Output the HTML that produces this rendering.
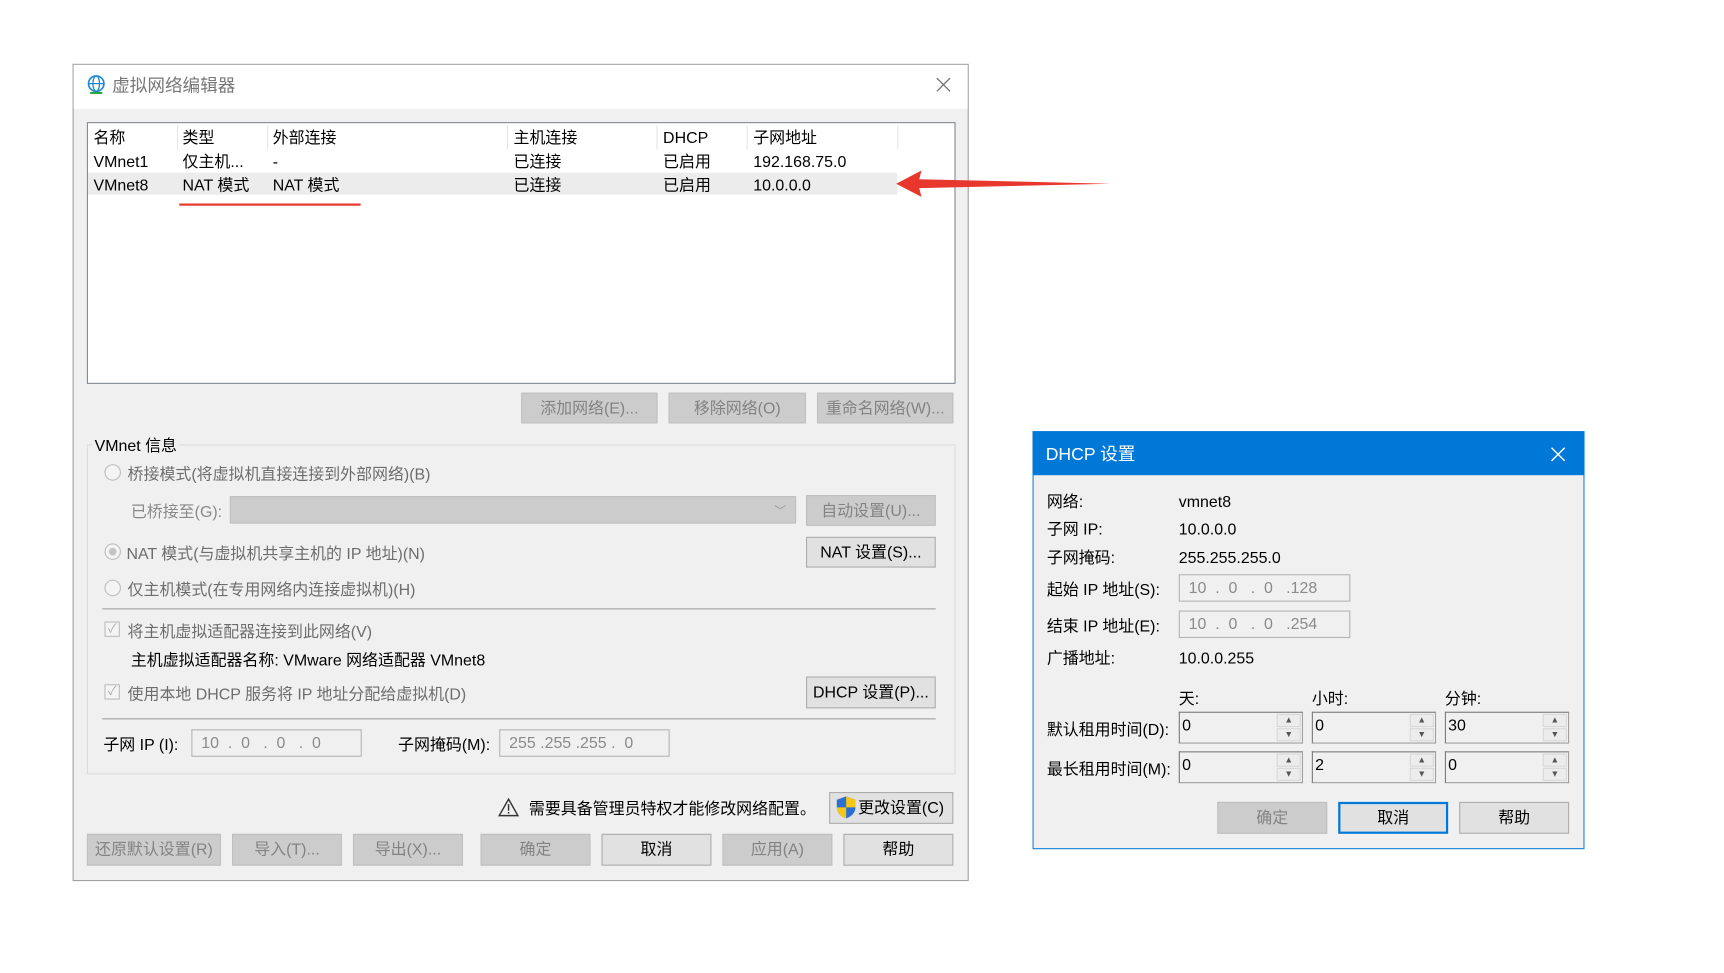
<!DOCTYPE html>
<html><head><meta charset="utf-8"><style>
*{box-sizing:border-box;margin:0;padding:0}
body{width:1724px;height:973px;background:#fff;overflow:hidden;font-family:"Liberation Sans","Noto Sans CJK SC",sans-serif;}
#s{position:absolute;left:0;top:0;width:1560px;height:880px;transform:scale(1.0996,1.1);transform-origin:0 0;}
.a{position:absolute;white-space:nowrap;font-size:14.5px;line-height:18px;color:#000;margin-top:2px}
.g{color:#6d6d6d}
.btn{position:absolute;background:#e1e1e1;border:1px solid #adadad;font-size:14.5px;text-align:center;color:#000;font-family:inherit;padding-top:1px}
.dis{background:#cccccc;border-color:#bfbfbf;color:#838383}
.ip{position:absolute;background:#f0f0f0;border:1px solid #b4b4b4;font-size:14.5px;color:#8a8a8a;line-height:22px;padding-left:8px;white-space:pre;padding-top:1px}
.radio{position:absolute;width:15px;height:15px;border:1px solid #bcbcbc;border-radius:50%;background:#f4f4f4}
.chk{position:absolute;width:14px;height:14px;border:1px solid #bcbcbc;background:#f4f4f4;font-size:11px;line-height:12px;text-align:center;color:#aaa}
.spin{position:absolute;width:113px;height:29px;background:#f0f0f0;border:1px solid #a0a0a0;border-top-color:#7a7a7a;border-left-color:#7a7a7a;font-size:14.5px;line-height:24px;padding-left:2px}
.spin i{position:absolute;right:1px;width:22px;height:12px;border:1px solid #d8d8d8;background:#ececec;font-style:normal;font-size:8px;line-height:10px;text-align:center;color:#555}
</style></head><body><div id="s">

<div style="position:absolute;left:66px;top:58px;width:815px;height:743px;border:1px solid #a0a0a0;background:#f0f0f0"></div>
<div style="position:absolute;left:67px;top:59px;width:813px;height:40px;background:#fff"></div>
<svg style="position:absolute;left:79px;top:68px" width="17" height="18" viewBox="0 0 17 18"><circle cx="8.5" cy="8" r="7" fill="none" stroke="#1e88d0" stroke-width="1.5"/><ellipse cx="8.5" cy="8" rx="3" ry="7" fill="none" stroke="#1e88d0" stroke-width="1.2"/><line x1="1.5" y1="8" x2="15.5" y2="8" stroke="#1e88d0" stroke-width="1.2"/><line x1="3" y1="16.5" x2="14" y2="16.5" stroke="#2aa63a" stroke-width="2"/></svg>
<div class="a" style="left:102px;top:68px;font-size:16px;color:#777">虚拟网络编辑器</div>
<svg style="position:absolute;left:851px;top:70px" width="14" height="14"><path d="M1 1L13 13M13 1L1 13" stroke="#777" stroke-width="1.2"/></svg>

<div style="position:absolute;left:79px;top:111px;width:790px;height:238px;background:#fff;border:1px solid #828790"></div>
<div style="position:absolute;left:80px;top:157px;width:736px;height:20px;background:#ececec"></div>
<div style="position:absolute;left:161px;top:114px;width:1px;height:22px;background:#e5e5e5"></div>
<div style="position:absolute;left:243px;top:114px;width:1px;height:22px;background:#e5e5e5"></div>
<div style="position:absolute;left:461px;top:114px;width:1px;height:22px;background:#e5e5e5"></div>
<div style="position:absolute;left:597px;top:114px;width:1px;height:22px;background:#e5e5e5"></div>
<div style="position:absolute;left:679px;top:114px;width:1px;height:22px;background:#e5e5e5"></div>
<div style="position:absolute;left:816px;top:114px;width:1px;height:22px;background:#e5e5e5"></div>
<div class="a" style="left:85px;top:115px">名称</div><div class="a" style="left:166px;top:115px">类型</div><div class="a" style="left:248px;top:115px">外部连接</div><div class="a" style="left:467px;top:115px">主机连接</div><div class="a" style="left:603px;top:115px">DHCP</div><div class="a" style="left:685px;top:115px">子网地址</div>
<div class="a" style="left:85px;top:137px">VMnet1</div><div class="a" style="left:166px;top:137px">仅主机...</div><div class="a" style="left:248px;top:137px">-</div><div class="a" style="left:467px;top:137px">已连接</div><div class="a" style="left:603px;top:137px">已启用</div><div class="a" style="left:685px;top:137px">192.168.75.0</div>
<div class="a" style="left:85px;top:158px">VMnet8</div><div class="a" style="left:166px;top:158px">NAT 模式</div><div class="a" style="left:248px;top:158px">NAT 模式</div><div class="a" style="left:467px;top:158px">已连接</div><div class="a" style="left:603px;top:158px">已启用</div><div class="a" style="left:685px;top:158px">10.0.0.0</div>
<div style="position:absolute;left:163px;top:185px;width:165px;height:2px;background:#e8372c"></div>
<svg style="position:absolute;left:810px;top:150px" width="205" height="34"><polygon points="5,17 28,5 26,13 200,17 26,21 28,29" fill="#e8372c"/></svg>

<div class="btn dis" style="left:474px;top:357px;width:124px;height:28px;line-height:26px">添加网络(E)...</div>
<div class="btn dis" style="left:608px;top:357px;width:125px;height:28px;line-height:26px">移除网络(O)</div>
<div class="btn dis" style="left:743px;top:357px;width:124px;height:28px;line-height:26px">重命名网络(W)...</div>

<div style="position:absolute;left:79px;top:404px;width:790px;height:300px;border:1px solid #dcdcdc"></div>
<div class="a" style="left:84px;top:395px;background:#f0f0f0;padding:0 2px">VMnet 信息</div>
<div class="radio" style="left:95px;top:422px"></div><div class="a g" style="left:116px;top:421px">桥接模式(将虚拟机直接连接到外部网络)(B)</div>
<div class="a g" style="left:119px;top:455px;color:#8a8a8a">已桥接至(G):</div>
<div style="position:absolute;left:209px;top:451px;width:515px;height:25px;background:#cccccc;border:1px solid #bfbfbf"></div>
<div class="a" style="left:704px;top:454px;color:#999;font-size:11px">﹀</div>
<div class="btn dis" style="left:733px;top:450px;width:118px;height:28px;line-height:26px">自动设置(U)...</div>
<div class="radio" style="left:95px;top:494px"><div style="position:absolute;left:3px;top:3px;width:7px;height:7px;border-radius:50%;background:#c4c4c4"></div></div><div class="a g" style="left:115px;top:493px">NAT 模式(与虚拟机共享主机的 IP 地址)(N)</div>
<div class="btn" style="left:733px;top:488px;width:118px;height:28px;line-height:26px">NAT 设置(S)...</div>
<div class="radio" style="left:95px;top:527px"></div><div class="a g" style="left:116px;top:526px">仅主机模式(在专用网络内连接虚拟机)(H)</div>
<div style="position:absolute;left:93px;top:553px;width:758px;height:1px;background:#a0a0a0"></div>
<div class="chk" style="left:95px;top:565px">✓</div><div class="a g" style="left:116px;top:564px">将主机虚拟适配器连接到此网络(V)</div>
<div class="a" style="left:119px;top:590px">主机虚拟适配器名称: VMware 网络适配器 VMnet8</div>
<div class="chk" style="left:95px;top:622px">✓</div><div class="a g" style="left:116px;top:621px">使用本地 DHCP 服务将 IP 地址分配给虚拟机(D)</div>
<div class="btn" style="left:733px;top:615px;width:118px;height:29px;line-height:27px">DHCP 设置(P)...</div>
<div style="position:absolute;left:93px;top:653px;width:758px;height:1px;background:#a0a0a0"></div>
<div class="a" style="left:94px;top:667px">子网 IP (I):</div>
<div class="ip" style="left:174px;top:663px;width:155px;height:25px">10  .  0   .  0   .  0</div>
<div class="a" style="left:362px;top:667px">子网掩码(M):</div>
<div class="ip" style="left:454px;top:663px;width:155px;height:25px">255 .255 .255 .  0</div>

<svg style="position:absolute;left:453px;top:725px" width="19" height="18"><polygon points="9.5,1.5 18,16.5 1,16.5" fill="none" stroke="#333" stroke-width="1.3"/><line x1="9.5" y1="6" x2="9.5" y2="12" stroke="#333" stroke-width="1.3"/><rect x="8.8" y="13.2" width="1.4" height="1.4" fill="#333"/></svg>
<div class="a" style="left:481px;top:725px">需要具备管理员特权才能修改网络配置。</div>
<div class="btn" style="left:754px;top:720px;width:113px;height:29px;line-height:27px;padding-left:18px">更改设置(C)</div>
<svg style="position:absolute;left:760px;top:723px" width="19" height="22" viewBox="0 0 19 22"><path d="M9.5 1 L18 4 V11 C18 16 14 19.5 9.5 21 C5 19.5 1 16 1 11 V4 Z" fill="#2b6fd0"/><path d="M9.5 1 L18 4 V11 H9.5 Z" fill="#f5c518"/><path d="M1 11 H9.5 V21 C5 19.5 1 16 1 11Z" fill="#f5c518"/></svg>

<div class="btn dis" style="left:79px;top:758px;width:122px;height:29px;line-height:27px">还原默认设置(R)</div>
<div class="btn dis" style="left:211px;top:758px;width:100px;height:29px;line-height:27px">导入(T)...</div>
<div class="btn dis" style="left:321px;top:758px;width:100px;height:29px;line-height:27px">导出(X)...</div>
<div class="btn dis" style="left:437px;top:758px;width:100px;height:29px;line-height:27px">确定</div>
<div class="btn" style="left:547px;top:758px;width:100px;height:29px;line-height:27px">取消</div>
<div class="btn dis" style="left:657px;top:758px;width:100px;height:29px;line-height:27px">应用(A)</div>
<div class="btn" style="left:767px;top:758px;width:100px;height:29px;line-height:27px">帮助</div>

<div style="position:absolute;left:939px;top:392px;width:502px;height:380px;background:#f0f0f0;border:1px solid #1883d7"></div>
<div style="position:absolute;left:939px;top:392px;width:502px;height:40px;background:#0078d7"></div>
<div class="a" style="left:951px;top:403px;color:#fff;font-size:16px">DHCP 设置</div>
<svg style="position:absolute;left:1410px;top:406px" width="14" height="14"><path d="M1 1L13 13M13 1L1 13" stroke="#fff" stroke-width="1.3"/></svg>
<div class="a" style="left:952px;top:446px">网络:</div><div class="a" style="left:1072px;top:446px">vmnet8</div>
<div class="a" style="left:952px;top:471px">子网 IP:</div><div class="a" style="left:1072px;top:471px">10.0.0.0</div>
<div class="a" style="left:952px;top:497px">子网掩码:</div><div class="a" style="left:1072px;top:497px">255.255.255.0</div>
<div class="a" style="left:952px;top:526px">起始 IP 地址(S):</div>
<div class="ip" style="left:1072px;top:522px;width:156px;height:25px">10  .  0   .  0   .128</div>
<div class="a" style="left:952px;top:559px">结束 IP 地址(E):</div>
<div class="ip" style="left:1072px;top:555px;width:156px;height:25px">10  .  0   .  0   .254</div>
<div class="a" style="left:952px;top:588px">广播地址:</div><div class="a" style="left:1072px;top:588px">10.0.0.255</div>
<div class="a" style="left:1072px;top:625px">天:</div><div class="a" style="left:1193px;top:625px">小时:</div><div class="a" style="left:1314px;top:625px">分钟:</div>
<div class="a" style="left:952px;top:653px">默认租用时间(D):</div>
<div class="a" style="left:952px;top:689px">最长租用时间(M):</div>
<div class="spin" style="left:1072px;top:647px">0<i style="top:1px">▲</i><i style="top:14px">▼</i></div>
<div class="spin" style="left:1193px;top:647px">0<i style="top:1px">▲</i><i style="top:14px">▼</i></div>
<div class="spin" style="left:1314px;top:647px">30<i style="top:1px">▲</i><i style="top:14px">▼</i></div>
<div class="spin" style="left:1072px;top:683px">0<i style="top:1px">▲</i><i style="top:14px">▼</i></div>
<div class="spin" style="left:1193px;top:683px">2<i style="top:1px">▲</i><i style="top:14px">▼</i></div>
<div class="spin" style="left:1314px;top:683px">0<i style="top:1px">▲</i><i style="top:14px">▼</i></div>
<div class="btn dis" style="left:1107px;top:729px;width:100px;height:29px;line-height:27px">确定</div>
<div class="btn" style="left:1217px;top:729px;width:100px;height:29px;line-height:25px;border:2px solid #0078d7">取消</div>
<div class="btn" style="left:1327px;top:729px;width:100px;height:29px;line-height:27px">帮助</div>

</div></body></html>
